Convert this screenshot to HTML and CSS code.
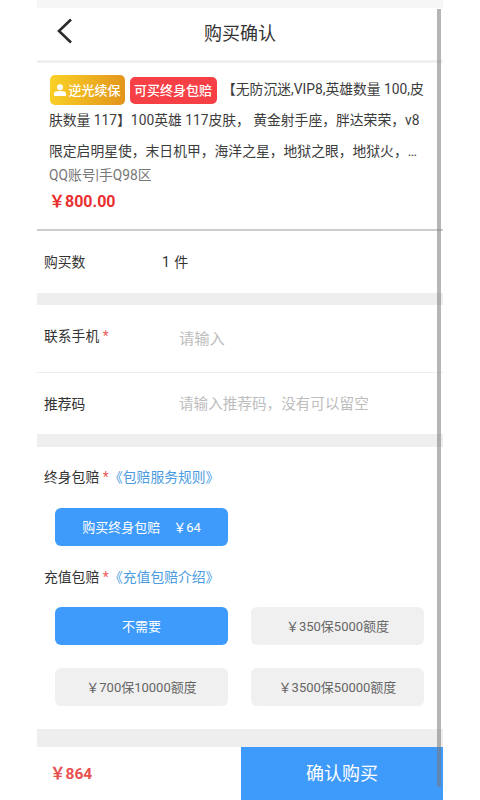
FILE: index.html
```html
<!DOCTYPE html>
<html lang="zh">
<head>
<meta charset="utf-8">
<title>购买确认</title>
<link rel="stylesheet" href="styles.css">
</head>
<body>
<div class="phone">
  <div class="strip"></div>
  <header class="header">
    <svg class="back" width="16" height="26" viewBox="0 0 16 26"><path d="M14 1.500 2 13 14 24.500" fill="none" stroke="#2b2b2b" stroke-width="2.600"/></svg>
    <h1 class="title">购买确认</h1>
  </header>
  <section class="product">
    <div class="desc"><span class="tag tag-gold"><svg width="12" height="12" viewBox="0 0 12 12"><circle cx="6" cy="3.200" r="3" fill="#fff"/><path d="M0 12V9.500C0 7.800 2 7 6 7s6 .8 6 2.500V12Z" fill="#fff"/></svg><span class="tag-text">逆光续保</span></span><span class="tag tag-red">可买终身包赔</span><span class="lead">【无防沉迷,VIP8,英雄数量 100,皮肤数量 117】100英雄 117皮肤， 黄金射手座，胖达荣荣，v8限定启明星使，末日机甲，海洋之星，地狱之眼，地狱火，…</span></div>
    <div class="meta">QQ账号|手Q98区</div>
    <div class="price">￥800.00</div>
  </section>
  <section class="row row-qty">
    <span class="label">购买数</span><span class="qty">1 件</span>
  </section>
  <div class="gap gap-a"></div>
  <section class="row row-phone">
    <span class="label">联系手机 <i class="star">*</i></span><span class="hint hint-short">请输入</span>
  </section>
  <section class="row row-ref">
    <span class="label">推荐码</span><span class="hint">请输入推荐码，没有可以留空</span>
  </section>
  <div class="gap gap-b"></div>
  <section class="options">
    <div class="opt-title">终身包赔 <i class="star">*</i> <a class="rule">《包赔服务规则》</a></div>
    <div class="opt-grid opt-first">
      <div class="opt on">购买终身包赔 &nbsp;&nbsp;&nbsp;￥64</div>
    </div>
    <div class="opt-title opt-title2">充值包赔 <i class="star">*</i> <a class="rule">《充值包赔介绍》</a></div>
    <div class="opt-grid">
      <div class="opt on">不需要</div>
      <div class="opt">￥350保5000额度</div>
      <div class="opt">￥700保10000额度</div>
      <div class="opt">￥3500保50000额度</div>
    </div>
  </section>
  <div class="gap gap-c"></div>
  <footer class="footer">
    <div class="total">￥864</div>
    <button class="buy">确认购买</button>
  </footer>
  <div class="scrollbar"></div>
</div>
</body>
</html>
```
FILE: styles.css
```css
* { box-sizing: border-box; }
html, body { margin: 0; padding: 0; background: #fff; }
body {
  width: 480px;
  height: 800px;
  overflow: hidden;
  font-family: Roboto, "Noto Sans CJK SC", sans-serif;
  color: #333;
}
.phone {
  position: relative;
  width: 406px;
  height: 800px;
  margin-left: 37px;
  overflow: hidden;
  background: #fff;
}
.strip { height: 8px; background: #f6f6f6; }
.header {
  height: 55px;
  border-bottom: 3px solid #f0f0f0;
  display: flex;
  align-items: center;
  justify-content: center;
  position: relative;
}
.back { position: absolute; left: 20px; top: 10px; }
.title { margin: 0; font-size: 18px; font-weight: 400; color: #333; line-height: 24px; }
.product {
  height: 168px;
  padding: 11px 15px 0 12px;
  border-bottom: 2px solid #ccc;
}
.desc {
  font-size: 13.800px;
  line-height: 30.300px;
  color: #3c3c3c;
}
.tag {
  display: inline-flex;
  align-items: center;
  justify-content: center;
  vertical-align: middle;
  color: #fff;
  font-size: 13px;
  font-weight: 500;
  border-radius: 5px;
  line-height: 1;
}
.tag svg { margin-right: 2px; }
.tag-gold {
  width: 75px;
  height: 30px;
  margin-left: 1px;
  background: linear-gradient(100deg, #fad227, #e2931a);
}
.tag-red {
  width: 87px;
  height: 27px;
  margin-left: 4.500px;
  background: #f64045;
}
.lead { margin-left: 5.500px; }
.meta { font-size: 13.800px; line-height: 20px; color: #777; margin-top: -1px; }
.price { font-size: 16px; font-weight: 700; line-height: 24px; color: #ea2f2f; margin-top: 5px; }
.row { display: flex; align-items: center; padding-left: 7px; }
.label { font-size: 13.800px; color: #333; width: 118px; flex: none; }
.star { font-style: normal; color: #ee5a5a; }
.row-qty { height: 62px; padding-bottom: 2px; }
.qty { font-size: 14px; color: #333; letter-spacing: .4px; }
.gap { background: #eee; }
.gap-a { height: 12px; }
.gap-b { height: 13px; }
.gap-c { height: 18px; }
.row-phone { height: 68px; border-bottom: 1px solid #eee; align-items: flex-start; padding-top: 20px; }
.row-ref { height: 61px; padding-bottom: 2px; }
.hint { font-size: 14.600px; color: #bdbdbd; margin-left: 17px; }
.hint-short { font-size: 15.300px; margin-top: 1px; }
.options { height: 282px; padding: 20px 19px 0 7px; }
.opt-title { font-size: 13.800px; line-height: 20px; color: #333; }
.opt-title2 { margin-top: 21px; }
.rule { color: #4a9be0; margin-left: -3px; }
.opt-grid {
  display: grid;
  grid-template-columns: 173px 173px;
  column-gap: 23px;
  row-gap: 23px;
  margin: 20px 0 0 11px;
}
.opt-first { margin-top: 21px; }
.opt {
  height: 38px;
  padding-bottom: 2px;
  border-radius: 6px;
  background: #f0f0f0;
  color: #666;
  font-size: 13px;
  display: flex;
  align-items: center;
  justify-content: center;
}
.opt.on { background: #3f9bfb; color: #fff; }
.footer { height: 53px; display: flex; }
.total {
  flex: 1;
  padding-left: 13px;
  font-size: 15.500px;
  font-weight: 700;
  color: #e85050;
  line-height: 54px;
}
.buy {
  width: 202px;
  height: 53px;
  border: 0;
  padding: 0 0 4px;
  background: #3f9bfb;
  color: #fff;
  font: 400 18px Roboto, "Noto Sans CJK SC", sans-serif;
}
.scrollbar {
  position: absolute;
  left: 400px;
  top: 9px;
  width: 4px;
  height: 778px;
  background: rgba(120, 120, 120, .55);
}
```
